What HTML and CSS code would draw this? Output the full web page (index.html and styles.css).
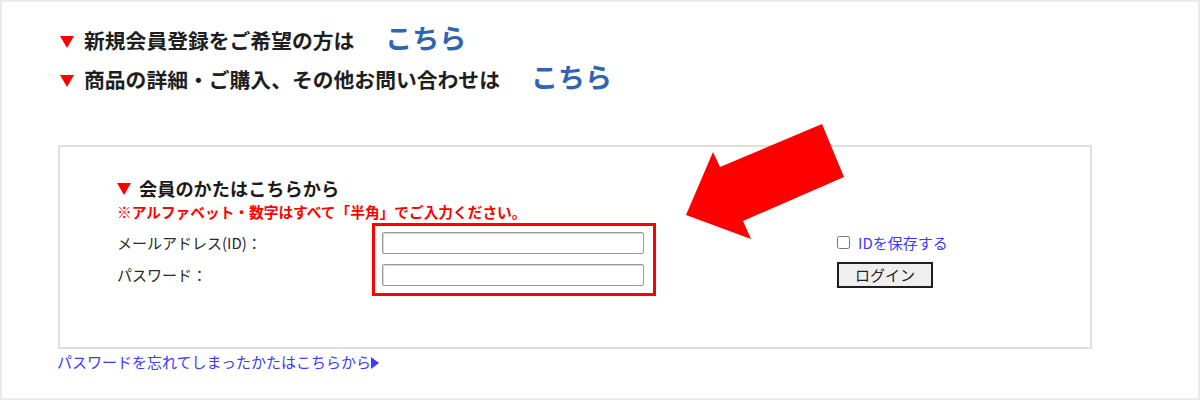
FILE: index.html
```html
<!DOCTYPE html>
<html lang="ja">
<head>
<meta charset="utf-8">
<title>会員ログイン</title>
<link rel="stylesheet" href="styles.css">
</head>
<body>
<div class="page">
  <div class="intro">
    <p class="intro-line"><span class="tri"></span><span class="intro-text">新規会員登録をご希望の方は</span><a class="kochira" href="#">こちら</a></p>
    <p class="intro-line"><span class="tri"></span><span class="intro-text">商品の詳細・ご購入、その他お問い合わせは</span><a class="kochira" href="#">こちら</a></p>
  </div>

  <div class="login-box">
    <h2 class="login-title"><span class="tri tri-small"></span>会員のかたはこちらから</h2>
    <p class="note">※アルファベット・数字はすべて「半角」でご入力ください。</p>
    <div class="form-row">
      <div class="labels">
        <div class="label">メールアドレス(ID)：</div>
        <div class="label">パスワード：</div>
      </div>
      <div class="fields">
        <input class="field" type="text">
        <input class="field" type="password">
      </div>
      <div class="actions">
        <label class="save"><input class="check" type="checkbox"><span>IDを保存する</span></label>
        <button class="login-btn" type="button">ログイン</button>
      </div>
    </div>
  </div>

  <a class="forgot" href="#">パスワードを忘れてしまったかたはこちらから<span class="play"></span></a>

  <svg class="arrow" width="1200" height="400" viewBox="0 0 1200 400" aria-hidden="true">
    <polygon points="686,215 713,152 720,167 822,124 844,177 743,221 751,239" fill="#ff0000"/>
  </svg>
</div>
</body>
</html>
```
FILE: styles.css
```css
* { box-sizing: border-box; }

html, body {
  margin: 0;
  padding: 0;
  background: #ffffff;
}

body {
  font-family: "Noto Sans CJK JP", "Noto Sans", sans-serif;
  color: #222222;
}

.page {
  position: relative;
  width: 1200px;
  height: 400px;
  border: 2px solid #ebebeb;
  overflow: hidden;
}

.intro {
  padding: 19px 0 0 58px;
}

.intro-line {
  margin: 0;
  height: 39px;
  line-height: 39px;
  font-size: 20.8px;
  font-weight: 700;
  color: #1e1e1e;
  white-space: nowrap;
}

.tri {
  display: inline-block;
  width: 0;
  height: 0;
  border-left: 7.5px solid transparent;
  border-right: 7.5px solid transparent;
  border-top: 12px solid #ff0000;
  margin-right: 10px;
  vertical-align: 1px;
}

.tri-small {
  border-left-width: 7px;
  border-right-width: 7px;
  border-top-width: 12px;
  margin-right: 8px;
  vertical-align: 1px;
}

.kochira {
  display: inline-block;
  margin-left: 31px;
  font-size: 27px;
  line-height: 27px;
  font-weight: 700;
  color: #2d64b4;
  text-decoration: none;
}

.login-box {
  margin: 46px 0 0 56px;
  width: 1034px;
  height: 204px;
  border: 2px solid #dfe1d2;
  padding: 29px 0 0 57px;
}

.login-title {
  margin: 0;
  font-size: 18.2px;
  line-height: 24px;
  font-weight: 700;
  color: #1a1a1a;
}

.note {
  margin: 2px 0 0;
  font-size: 14.7px;
  line-height: 20px;
  font-weight: 700;
  color: #ff0000;
}

.form-row {
  display: flex;
  align-items: flex-start;
  margin-top: 1px;
}

.labels {
  width: 255px;
  padding-top: 9px;
  display: flex;
  flex-direction: column;
  gap: 10px;
}

.label {
  font-size: 15px;
  line-height: 22px;
  color: #2a2a2a;
}

.fields {
  display: flex;
  flex-direction: column;
  gap: 10px;
  border: 3px solid #ff0000;
  padding: 6px 9px 7px 7px;
}

.field {
  width: 262px;
  height: 22px;
  margin: 0;
  border: 1px solid #9a9a9a;
  border-radius: 2px;
  background: #ffffff;
  box-shadow: inset 1px 1px 0 #d8d8d8;
  font-family: inherit;
  font-size: 14px;
}

.actions {
  margin-left: 181px;
  padding-top: 9px;
  display: flex;
  flex-direction: column;
  align-items: flex-start;
}

.save {
  display: flex;
  align-items: center;
  height: 20px;
  font-size: 15px;
  color: #3b3bff;
}

.check {
  width: 13px;
  height: 13px;
  margin: 0 8px 0 0;
}

.login-btn {
  margin-top: 10px;
  width: 96px;
  height: 26px;
  padding: 0;
  border: 2px solid #1f1f1f;
  border-radius: 0;
  background: #efefef;
  font-family: inherit;
  font-size: 15px;
  line-height: 20px;
  color: #222222;
}

.forgot {
  display: inline-block;
  margin-left: 55px;
  font-size: 15px;
  line-height: 18px;
  color: #3b3bff;
  text-decoration: none;
}

.play {
  display: inline-block;
  width: 0;
  height: 0;
  border-top: 6px solid transparent;
  border-bottom: 6px solid transparent;
  border-left: 8px solid #3b3bff;
  margin-left: 0;
  vertical-align: -1px;
}

.arrow {
  position: absolute;
  top: -2px;
  left: -2px;
  pointer-events: none;
}
```
